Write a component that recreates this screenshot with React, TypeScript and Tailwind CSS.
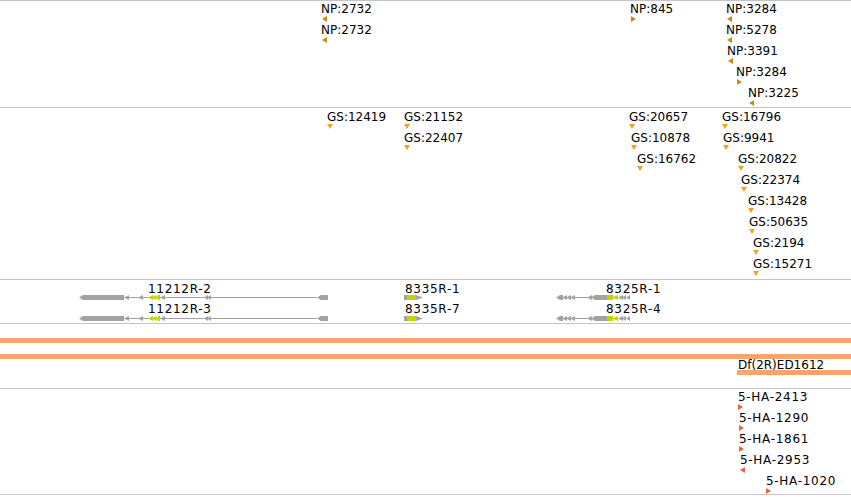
import React from "react";

type Dir = "L" | "R" | "D";
type Feat = { x: number; row: number; label: string; dir: Dir };

const NP: Feat[] = [
  { x: 322, row: 0, dir: "L", label: "NP:2732" },
  { x: 322, row: 1, dir: "L", label: "NP:2732" },
  { x: 631, row: 0, dir: "R", label: "NP:845" },
  { x: 727, row: 0, dir: "L", label: "NP:3284" },
  { x: 727, row: 1, dir: "L", label: "NP:5278" },
  { x: 728, row: 2, dir: "L", label: "NP:3391" },
  { x: 737, row: 3, dir: "R", label: "NP:3284" },
  { x: 749, row: 4, dir: "L", label: "NP:3225" },
];

const GS: Feat[] = [
  { x: 327, row: 0, dir: "D", label: "GS:12419" },
  { x: 404, row: 0, dir: "D", label: "GS:21152" },
  { x: 404, row: 1, dir: "D", label: "GS:22407" },
  { x: 629, row: 0, dir: "D", label: "GS:20657" },
  { x: 631, row: 1, dir: "D", label: "GS:10878" },
  { x: 637, row: 2, dir: "D", label: "GS:16762" },
  { x: 722, row: 0, dir: "D", label: "GS:16796" },
  { x: 723, row: 1, dir: "D", label: "GS:9941" },
  { x: 738, row: 2, dir: "D", label: "GS:20822" },
  { x: 741, row: 3, dir: "D", label: "GS:22374" },
  { x: 748, row: 4, dir: "D", label: "GS:13428" },
  { x: 749, row: 5, dir: "D", label: "GS:50635" },
  { x: 753, row: 6, dir: "D", label: "GS:2194" },
  { x: 753, row: 7, dir: "D", label: "GS:15271" },
];

const HA: Feat[] = [
  { x: 738, row: 0, dir: "R", label: "5-HA-2413" },
  { x: 739, row: 1, dir: "R", label: "5-HA-1290" },
  { x: 739, row: 2, dir: "R", label: "5-HA-1861" },
  { x: 740, row: 3, dir: "L", label: "5-HA-2953" },
  { x: 766, row: 4, dir: "R", label: "5-HA-1020" },
];

function Tri({ dir, color }: { dir: Dir; color: string }) {
  if (dir === "D")
    return (
      <svg width="6" height="5" viewBox="0 0 6 5" className="block">
        <polygon points="0,0 6,0 3,5" fill={color} />
      </svg>
    );
  return (
    <svg width="5" height="6" viewBox="0 0 5 6" className="block">
      <polygon points={dir === "L" ? "5,0 5,6 0,3" : "0,0 0,6 5,3"} fill={color} />
    </svg>
  );
}

function FeatureTrack({
  items,
  color,
  textTop,
  triTop,
  textDx,
  tracking,
}: {
  items: Feat[];
  color: string;
  textTop: number;
  triTop: number;
  textDx: number;
  tracking?: string;
}) {
  return (
    <>
      {items.map((f, i) => (
        <React.Fragment key={i}>
          <div
            className={`absolute whitespace-nowrap text-[12px] leading-[12px] text-black ${tracking ?? ""}`}
            style={{ left: f.x + textDx, top: textTop + f.row * 21 }}
          >
            {f.label}
          </div>
          <div className="absolute" style={{ left: f.x, top: triTop + f.row * 21 }}>
            <Tri dir={f.dir} color={color} />
          </div>
        </React.Fragment>
      ))}
    </>
  );
}

const G = "#a3a3a3";
const Y = "#c3d500";

function lArrow(x: number, cy: number, w = 5, h = 5, fill = G) {
  return (
    <polygon
      points={`${x},${cy} ${x + w},${cy - h / 2} ${x + w},${cy + h / 2}`}
      fill={fill}
    />
  );
}

function GeneRow({ cy }: { cy: number }) {
  const t = cy - 2.5;
  const b = cy + 2.5;
  return (
    <g>
      {/* 11212R */}
      <rect x={124} y={cy - 0.5} width={193} height={1} fill={G} />
      <polygon points={`79,${cy} 83,${t} 124,${t} 124,${b} 83,${b}`} fill={G} />
      {lArrow(124, cy, 5, 5)}
      {lArrow(138, cy, 5, 5)}
      {lArrow(204, cy, 4, 5)}
      {lArrow(207, cy, 4, 5)}
      {lArrow(148, cy, 5, 5, Y)}
      {lArrow(151.5, cy, 5, 5, Y)}
      {lArrow(155, cy, 5, 5, Y)}
      <rect x={158} y={t} width={2} height={5} fill={Y} />
      {lArrow(160, cy, 5, 5)}
      <polygon points={`317,${cy} 321,${t} 328,${t} 328,${b} 321,${b}`} fill={G} />

      {/* 8335R */}
      <rect x={404} y={t} width={3} height={5} fill={G} />
      <rect x={407} y={t} width={9} height={5} fill={Y} />
      <polygon points={`416,${t} 423,${cy} 416,${b}`} fill={G} />

      {/* 8325R */}
      <rect x={570} y={cy - 0.5} width={20} height={1} fill={G} />
      <polygon points={`556,${cy} 560,${t} 563,${t} 563,${b} 560,${b}`} fill={G} />
      {lArrow(562, cy, 5, 5)}
      {lArrow(566, cy, 5, 5)}
      {lArrow(570, cy, 5, 5)}
      {lArrow(587, cy, 5, 5)}
      <polygon points={`591,${cy} 595,${t} 607,${t} 607,${b} 595,${b}`} fill={G} />
      <rect x={607} y={t} width={6} height={5} fill={Y} />
      {lArrow(612, cy, 6, 5, Y)}
      {lArrow(618, cy, 5, 5)}
      {lArrow(622, cy, 4, 5)}
      {lArrow(626, cy, 4, 5)}
    </g>
  );
}

function GeneLabel({ children }: { children: React.ReactNode }) {
  return <div className="text-[12px] leading-[12px] tracking-[0.7px] whitespace-nowrap">{children}</div>;
}

export default function App() {
  return (
    <div className="w-[851px] h-[497px] bg-white overflow-hidden font-['DejaVu_Sans',sans-serif] text-black">
      <div className="flex flex-col border-t border-[#c4c4c4]">
        <div className="relative h-[107px] border-b border-[#c4c4c4]">
          <FeatureTrack items={NP} color="#c88c0c" textTop={2} triTop={15} textDx={-1} />
        </div>
        <div className="relative h-[172px] border-b border-[#c4c4c4]">
          <FeatureTrack items={GS} color="#f0a21e" textTop={3} triTop={16} textDx={0} />
        </div>
        <div className="relative h-[44px] border-b border-[#c4c4c4]">
          <svg width="851" height="43" className="absolute left-0 top-0">
            <GeneRow cy={17.5} />
            <GeneRow cy={38.5} />
          </svg>
          <div className="absolute left-[148px] top-[3px] flex flex-col gap-[8px]">
            <GeneLabel>11212R-2</GeneLabel>
            <GeneLabel>11212R-3</GeneLabel>
          </div>
          <div className="absolute left-[405px] top-[3px] flex flex-col gap-[8px]">
            <GeneLabel>8335R-1</GeneLabel>
            <GeneLabel>8335R-7</GeneLabel>
          </div>
          <div className="absolute left-[606px] top-[3px] flex flex-col gap-[8px]">
            <GeneLabel>8325R-1</GeneLabel>
            <GeneLabel>8325R-4</GeneLabel>
          </div>
        </div>
        <div className="relative h-[65px] border-b border-[#c4c4c4]">
          <div className="absolute left-0 right-0 top-[14px] h-[5px] bg-[#f6a470]" />
          <div className="absolute left-0 right-0 top-[30px] h-[5px] bg-[#f6a470]" />
          <div className="absolute left-[738px] top-[35px] text-[12px] leading-[12px] whitespace-nowrap">
            Df(2R)ED1612
          </div>
          <div className="absolute left-[737px] right-0 top-[46px] h-[5px] bg-[#f6a470]" />
        </div>
        <div className="relative h-[106px] border-b border-[#c4c4c4]">
          <FeatureTrack
            items={HA}
            color="#f2603e"
            textTop={2}
            triTop={15}
            textDx={0}
            tracking="tracking-[0.7px]"
          />
        </div>
      </div>
    </div>
  );
}
